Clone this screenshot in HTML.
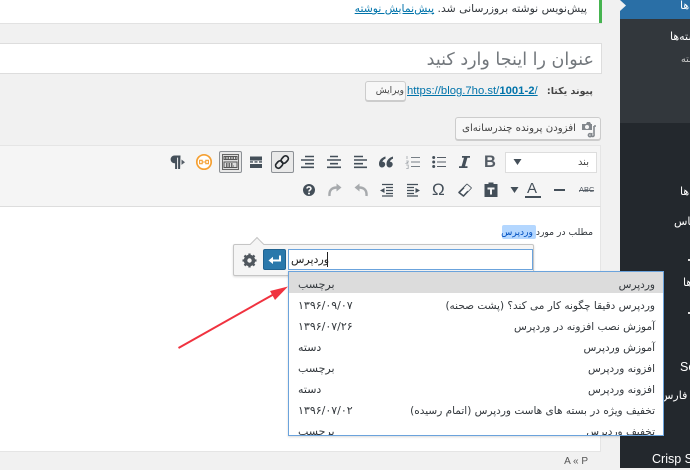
<!DOCTYPE html>
<html lang="fa"><head><meta charset="utf-8"><style>
html,body{margin:0;padding:0}
body{width:690px;height:468px;overflow:hidden;background:#f1f1f1;position:relative;font-family:"DejaVu Sans","Liberation Sans",sans-serif;color:#32373c}
.a{position:absolute;box-sizing:border-box}
.t{position:absolute;white-space:nowrap;direction:rtl;line-height:16px;height:16px}
.l{position:absolute;white-space:nowrap;line-height:16px;height:16px}
svg{position:absolute;overflow:visible}
.r{right:8px;font-size:10.5px;color:#32373c}
.d{left:9px;font-size:11px;color:#32373c}
</style></head><body>
<div class="a" style="left:0;top:0;width:602px;height:24px;background:#fff;border-bottom:1px solid #e2e2e2"></div>
<div class="a" style="left:599px;top:0;width:3px;height:23px;background:#46b450"></div>
<div class="t" style="right:103px;top:1px;font-size:10.8px;color:#32373c">پیش‌نویس نوشته بروزرسانی شد. <span style="color:#0073aa;text-decoration:underline">پیش‌نمایش نوشته</span></div>

<div class="a" style="left:-2px;top:43px;width:604px;height:31px;background:#fff;border:1px solid #ddd"></div>
<div class="t" style="right:96px;top:47px;font-size:17.5px;line-height:26px;height:26px;color:#72777c">عنوان را اینجا وارد کنید</div>

<div class="t" style="right:97px;top:84px;font-size:9.5px;font-weight:bold;color:#444">پیوند یکتا:</div>
<div class="l" style="left:407px;top:83px;font-size:11.3px;font-family:'Liberation Sans',sans-serif;color:#0073aa;text-decoration:underline">https://blog.7ho.st/<b>1001-2</b>/</div>
<div class="a" style="left:365px;top:81px;width:41px;height:20px;background:#f7f7f7;border:1px solid #ccc;border-radius:3px;box-shadow:0 1px 0 #ccc"></div>
<div class="t" style="right:286px;top:83px;font-size:9px;color:#444">ویرایش</div>

<div class="a" style="left:455px;top:117px;width:146px;height:23px;background:#f7f7f7;border:1px solid #ccc;border-radius:3px;box-shadow:0 1px 0 #ccc"></div>
<div class="t" style="right:114px;top:121px;font-size:10.2px;color:#444">افزودن پرونده چندرسانه‌ای</div>
<svg style="left:581px;top:121px" width="16" height="16" viewBox="0 0 16 16"><path d="M1 3h4l1-2h3l1 2h1v6H1z" fill="#82878c"/><circle cx="6" cy="6" r="2" fill="#f7f7f7"/><path d="M13 5v8.500M13 5h2M9 12.500a1.600 1.600 0 1 0 .1 0M13 13.500a1.500 1.500 0 1 1-1.500-1" fill="none" stroke="#82878c" stroke-width="1.600"/></svg>

<!-- editor -->
<div class="a" style="left:-2px;top:145px;width:603px;height:62px;background:#f5f5f5;border:1px solid #e5e5e5"></div>
<div class="a" style="left:-2px;top:206px;width:603px;height:246px;background:#fff;border:1px solid #e5e5e5;border-top:1px solid #ddd"></div>

<!-- toolbar row 1 -->
<svg style="left:170px;top:154px" width="16" height="16" viewBox="0 0 16 16"><path d="M12 1.500H6a3.800 3.800 0 0 0 0 7.800h.6V15h2V3.600h1V15h2z" fill="#444f59" transform="translate(-1.500)"/><path d="M11.500 5.500l3.500 2.700-3.500 2.700z" fill="#555d66"/></svg>
<svg style="left:196px;top:154px" width="16" height="16" viewBox="0 0 16 16"><circle cx="8" cy="8" r="7.200" fill="#fff" stroke="#f5a033" stroke-width="1.700"/><path d="M3.600 6.300h2.600v3.400H3.600zM9.800 6.300h2.600v3.400H9.800zM6.600 8h2.800" fill="none" stroke="#f5a033" stroke-width="1.100"/></svg>
<div class="a" style="left:219px;top:151px;width:23px;height:22px;background:#e9e9e9;border:1px solid #8c9095;border-radius:2px"></div>
<svg style="left:222px;top:154px" width="17" height="16" viewBox="0 0 17 16"><rect x=".5" y=".5" width="16" height="15" fill="#ddd" stroke="#666" stroke-width="1"/><path d="M2 2.500h13v3H2zM2 8h13v5.500H2z" fill="none" stroke="#555" stroke-width="1"/><path d="M3 4h11M4 10h7M4 12h8" stroke="#444" stroke-width="1.400" stroke-dasharray="1.500 1"/></svg>
<svg style="left:248px;top:154px" width="16" height="16" viewBox="0 0 16 16"><path d="M2 2.500h12v4H2zM2 10h12v4H2zM2 7.200h3v1.400H2zM6.500 7.200h3v1.400h-3zM11 7.200h3v1.400h-3z" fill="#444f59"/></svg>
<div class="a" style="left:271px;top:151px;width:23px;height:22px;background:#e9e9e9;border:1px solid #8c9095;border-radius:2px"></div>
<svg style="left:274px;top:154px" width="16" height="16" viewBox="0 0 16 16"><g fill="none" stroke="#23282d" stroke-width="1.700"><rect x="8" y="1.500" width="5.500" height="8" rx="2.700" transform="rotate(42 10.700 5.500)"/><rect x="2.500" y="6.500" width="5.500" height="8" rx="2.700" transform="rotate(42 5.200 10.500)"/></g></svg>
<svg style="left:300px;top:154px" width="16" height="16" viewBox="0 0 16 16"><path d="M5 2.500h9M1 6h13M5 9.700h9M1 13.300h13" stroke="#444f59" stroke-width="1.600"/></svg>
<svg style="left:326px;top:154px" width="16" height="16" viewBox="0 0 16 16"><path d="M4 2.500h8M1 6h14M4 9.700h8M1 13.300h14" stroke="#444f59" stroke-width="1.600"/></svg>
<svg style="left:352px;top:154px" width="16" height="16" viewBox="0 0 16 16"><path d="M2 2.500h9M2 6h13M2 9.700h9M2 13.300h13" stroke="#444f59" stroke-width="1.600"/></svg>
<svg style="left:378px;top:154px" width="16" height="16" viewBox="0 0 16 16"><path d="M7.500 2.500C4 3.500 1 6 1 10c0 2 1.200 3.500 3 3.500S7.200 12 7.200 10.300 6 7.700 4.300 7.700C5 6.200 6.200 5.200 7.500 4.800zM15 2.500c-3.500 1-6.500 3.500-6.500 7.500 0 2 1.200 3.500 3 3.500s3.200-1.500 3.200-3.200-1.200-2.600-2.900-2.600c.7-1.500 1.900-2.500 3.200-2.900z" fill="#444f59"/></svg>
<svg style="left:405px;top:154px" width="16" height="16" viewBox="0 0 16 16"><path d="M6 3.500h9M6 8h9M6 12.500h9" stroke="#777f86" stroke-width="1"/><path d="M2 2v3M1.200 7h2v1l-2 1.200h2M1.200 11h2v3.500h-2" fill="none" stroke="#a0a5aa" stroke-width=".8"/></svg>
<svg style="left:431px;top:154px" width="16" height="16" viewBox="0 0 16 16"><path d="M6 3.500h9M6 8h9M6 12.500h9" stroke="#555d66" stroke-width="1.100"/><circle cx="2.700" cy="3.500" r="1.500" fill="#444f59"/><circle cx="2.700" cy="8" r="1.500" fill="#444f59"/><circle cx="2.700" cy="12.500" r="1.500" fill="#444f59"/></svg>
<svg style="left:456px;top:154px" width="16" height="16" viewBox="0 0 16 16"><path d="M6 2h8v1.800h-2.600L9 12.200h2.500V14H3v-1.800h2.600L8 3.800H6z" fill="#444f59"/></svg>
<div class="l" style="left:484px;top:154px;font-family:'Liberation Sans',sans-serif;font-weight:bold;font-size:16.5px;color:#555d66">B</div>
<div class="a" style="left:505px;top:152px;width:92px;height:21px;background:#fff;border:1px solid #ddd"></div>
<svg style="left:513px;top:158px" width="10" height="8" viewBox="0 0 10 8"><path d="M.5 1h8L4.500 7z" fill="#444f59"/></svg>
<div class="t" style="right:101px;top:155px;font-size:10px;color:#444">بند</div>

<!-- toolbar row 2 -->
<svg style="left:301px;top:182px" width="16" height="16" viewBox="0 0 16 16"><circle cx="8" cy="8" r="6" fill="#444f59"/><path d="M5.900 6.500A2.100 2 0 0 1 10 6.500C10 8 8 8 8 9.500" fill="none" stroke="#fff" stroke-width="1.500"/><circle cx="8" cy="11.500" r="1" fill="#fff"/></svg>
<svg style="left:327px;top:182px" width="16" height="16" viewBox="0 0 16 16"><path d="M2.500 14C2 8.500 4.500 5.500 10 5.500" fill="none" stroke="#a7aaad" stroke-width="2.400"/><path d="M9.500 1.500l5 4-5 4z" fill="#a7aaad"/></svg>
<svg style="left:353px;top:182px" width="16" height="16" viewBox="0 0 16 16"><path d="M13.500 14C14 8.500 11.500 5.500 6 5.500" fill="none" stroke="#a7aaad" stroke-width="2.400"/><path d="M6.500 1.500l-5 4 5 4z" fill="#a7aaad"/></svg>
<svg style="left:379px;top:182px" width="16" height="16" viewBox="0 0 16 16"><path d="M3 2.500h11M7 5.500h7M7 8.500h7M7 11.500h7M3 14h11" stroke="#444f59" stroke-width="1.300"/><path d="M5.500 6v5L1 8.500z" fill="#444f59"/></svg>
<svg style="left:405px;top:182px" width="16" height="16" viewBox="0 0 16 16"><path d="M2 2.500h11M2 5.500h7M2 8.500h7M2 11.500h7M2 14h11" stroke="#444f59" stroke-width="1.300"/><path d="M10.500 6v5l4.500-2.500z" fill="#444f59"/></svg>
<div class="l" style="left:432px;top:182px;font-family:'Liberation Sans',sans-serif;font-size:17px;color:#444f59">Ω</div>
<svg style="left:457px;top:182px" width="16" height="16" viewBox="0 0 16 16"><path d="M10 2.500L14 6l-7.500 8L2 10.500z" fill="#fff" stroke="#444f59" stroke-width="1.600" stroke-linejoin="round"/><path d="M10 2.500L14 6l-3 3.200-4-3.500z" fill="#f5f5f5"/></svg>
<svg style="left:483px;top:181px" width="16" height="16" viewBox="0 0 16 16"><path d="M1.500 3h4V1.500h5V3h4v13h-13z" fill="#444f59"/><path d="M4.500 6.500h7v2H9v5H7v-5H4.500z" fill="#f5f5f5"/></svg>
<svg style="left:510px;top:186px" width="10" height="8" viewBox="0 0 10 8"><path d="M.5 1h8L4.500 7z" fill="#444f59"/></svg>
<div class="l" style="left:527px;top:181px;font-family:'Liberation Sans',sans-serif;font-size:15px;color:#444f59">A</div>
<div class="a" style="left:525px;top:196px;width:16px;height:2px;background:#444f59"></div>
<div class="a" style="left:554px;top:189px;width:11px;height:2px;background:#444f59"></div>
<div class="l" style="left:579px;top:182px;font-family:'Liberation Sans',sans-serif;font-size:7.500px;color:#555d66">ABC<span style="position:absolute;left:0;right:0;top:8px;height:1px;background:#555d66"></span></div>

<!-- content -->
<div class="a" style="left:502px;top:225px;width:34px;height:14px;background:#b4d7ff;border-radius:2px"></div>
<div class="t" style="right:97px;top:225px;font-size:9.2px;color:#32373c">مطلب در مورد <span style="color:#0050c0">وردپرس</span></div>

<!-- popover -->
<div class="a" style="left:233px;top:244px;width:301px;height:32px;background:#f5f5f5;border:1px solid #c5c5c5;border-radius:2px;box-shadow:0 1px 2px rgba(0,0,0,.15)"></div>
<div class="a" style="left:252px;top:239px;width:10px;height:10px;background:#f5f5f5;border:1px solid #c5c5c5;border-right:none;border-bottom:none;transform:rotate(45deg)"></div>
<svg style="left:242px;top:253px" width="15" height="15" viewBox="0 0 15 15"><circle cx="7.500" cy="7.500" r="4.300" fill="none" stroke="#50575e" stroke-width="2.800"/><path d="M7.500.5v14M.5 7.500h14M2.500 2.500l10 10M12.500 2.500l-10 10" stroke="#50575e" stroke-width="2.300"/><circle cx="7.500" cy="7.500" r="2.200" fill="#f5f5f5"/></svg>
<div class="a" style="left:263px;top:249px;width:23px;height:21px;background:#2a78ab;border:1px solid #1f6290;border-radius:2px"></div>
<svg style="left:268px;top:253px" width="14" height="13" viewBox="0 0 14 13"><path d="M12 2.500v5H3.500" fill="none" stroke="#fff" stroke-width="2"/><path d="M5 3.800v7.200L.5 7.500z" fill="#fff"/></svg>
<div class="a" style="left:288px;top:249px;width:245px;height:21px;background:#fff;border:1px solid #6ba3dc"></div>
<div class="l" style="left:291px;top:252px;font-size:11px;direction:ltr;color:#222">وردپرس</div>
<div class="a" style="left:327px;top:252px;width:1px;height:15px;background:#222"></div>

<!-- sidebar -->
<div class="a" style="left:620px;top:0;width:70px;height:468px;background:#23282d;overflow:hidden;color:#fff">
<div class="a" style="left:0;top:0;width:70px;height:19px;background:#2a6fa6"></div>
<div class="a" style="left:0;top:19px;width:70px;height:104px;background:#32373c"></div>
<div class="t" style="left:60px;top:-2px;font-size:11px;color:#fff">نوشته‌ها</div>
<div class="t" style="left:50px;top:29px;font-size:11px;color:#fff">نوشته‌ها</div>
<div class="t" style="left:61px;top:52px;font-size:9.500px;color:#ccc">نوشته</div>
<div class="t" style="left:60px;top:184px;font-size:11px;color:#fff">برگه‌ها</div>
<div class="t" style="left:54px;top:214px;font-size:11px;color:#fff">تماس</div>
<div class="a" style="left:68px;top:259px;width:2px;height:2px;background:#ddd"></div>
<div class="t" style="left:63px;top:275px;font-size:11px;color:#fff">افزونه‌ها</div>
<div class="a" style="left:68px;top:312px;width:2px;height:2px;background:#ddd"></div>
<div class="l" style="left:60px;top:359px;font-family:'Liberation Sans',sans-serif;font-size:12.500px;color:#fff">Se</div>
<div class="t" style="left:40px;top:388px;font-size:11px;color:#fff">پشتیبانی فارس</div>
<div class="l" style="left:32px;top:451px;font-family:'Liberation Sans',sans-serif;font-size:12.500px;color:#fff">Crisp Se</div>
</div>
<svg style="left:620px;top:0" width="7" height="12" viewBox="0 0 7 12"><path d="M0 0L6 5.500 0 11z" fill="#f1f1f1"/></svg>

<!-- dropdown -->
<div class="a" style="left:288px;top:271px;width:376px;height:165px;background:#fff;border:1px solid #6ba3dc;overflow:hidden;box-shadow:0 1px 2px rgba(0,0,0,.15)">
<div class="a" style="left:0;top:0;width:374px;height:21px;background:#dcdcdc"></div>
<div class="t r" style="top:5px">وردپرس</div><div class="t d" style="top:5px">برچسب</div>
<div class="t r" style="top:26px">وردپرس دقیقا چگونه کار می کند؟ (پشت صحنه)</div><div class="l d" style="top:26px;direction:ltr">۱۳۹۶/۰۹/۰۷</div>
<div class="t r" style="top:47px">آموزش نصب افزونه در وردپرس</div><div class="l d" style="top:47px;direction:ltr">۱۳۹۶/۰۷/۲۶</div>
<div class="t r" style="top:68px">آموزش وردپرس</div><div class="t d" style="top:68px">دسته</div>
<div class="t r" style="top:89px">افزونه وردپرس</div><div class="t d" style="top:89px">برچسب</div>
<div class="t r" style="top:110px">افزونه وردپرس</div><div class="t d" style="top:110px">دسته</div>
<div class="t r" style="top:131px">تخفیف ویژه در بسته های هاست وردپرس (اتمام رسیده)</div><div class="l d" style="top:131px;direction:ltr">۱۳۹۶/۰۷/۰۲</div>
<div class="t r" style="top:152px">تخفیف وردپرس</div><div class="t d" style="top:152px">برچسب</div>
</div>

<!-- red arrow -->
<svg style="left:0;top:0" width="690" height="468" viewBox="0 0 690 468"><path d="M178.500 348L276 293" stroke="#f0323f" stroke-width="2" fill="none"/><path d="M288 286.500L270 291l5 9z" fill="#f0323f"/></svg>

<div class="l" style="right:102px;left:auto;top:454px;font-family:'Liberation Sans',sans-serif;font-size:10px;color:#555">A « P</div>
</body></html>
